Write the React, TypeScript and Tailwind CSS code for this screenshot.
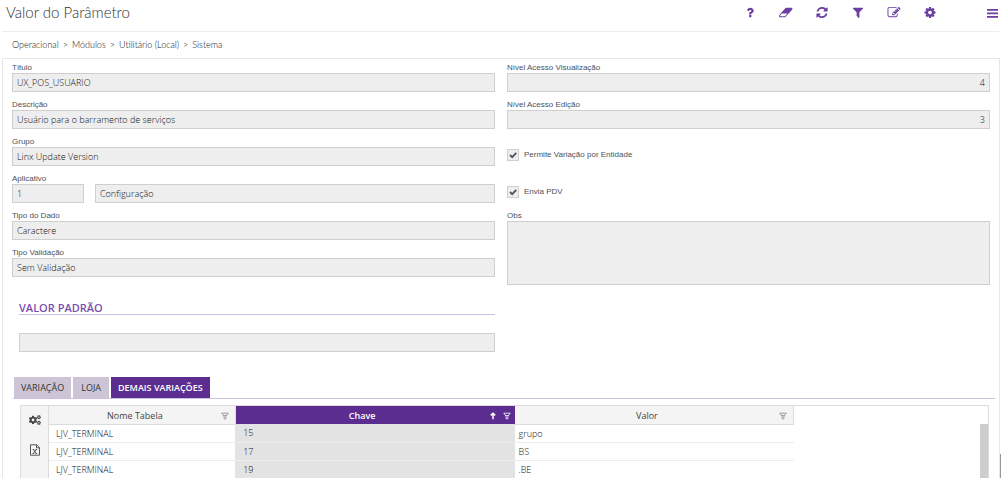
import type { ReactNode } from 'react';
import { FaCogs } from 'react-icons/fa';

const actions = [
  {
    label: 'Ajuda',
    box: '0 0 1792 1792',
    d: 'M1088 1256v240q0 16-12 28t-28 12h-240q-16 0-28-12t-12-28v-240q0-16 12-28t28-12h240q16 0 28 12t12 28zm316-600q0 54-15.5 101t-35 76.5-55 59.5-57.5 43.5-61 35.5q-41 23-68.5 65t-27.5 67q0 17-12 32.5t-28 15.5h-240q-15 0-25.5-18.5t-10.5-37.5v-45q0-83 65-156.5t143-108.5q59-27 84-56t25-76q0-42-46.5-74t-107.5-32q-65 0-108 29-35 25-107 115-13 16-31 16-12 0-25-8l-164-125q-13-10-15.5-25t5.5-28q160-266 464-266 80 0 161 31t146 83 106 127.5 41 158.5z',
  },
  {
    label: 'Limpar',
    box: '0 0 1920 1792',
    d: 'M832 1408l336-384h-768l-336 384h768zm1013-1077q15 34 9.5 71.5t-30.5 65.5l-896 1024q-38 44-96 44h-768q-38 0-69.5-20.5t-47.5-54.5q-15-34-9.5-71.5t30.5-65.5l896-1024q38-44 96-44h768q38 0 69.5 20.5t47.5 54.5z',
  },
  {
    label: 'Atualizar',
    box: '0 0 1792 1792',
    d: 'M1639 1056q0 5-1 7-64 268-268 434.5t-478 166.5q-146 0-282.5-55t-243.5-157l-129 129q-19 19-45 19t-45-19-19-45v-448q0-26 19-45t45-19h448q26 0 45 19t19 45-19 45l-137 137q71 66 161 102t187 36q134 0 250-65t186-179q11-17 53-117 8-23 30-23h192q13 0 22.5 9.5t9.5 22.5zm25-800v448q0 26-19 45t-45 19h-448q-26 0-45-19t-19-45 19-45l138-138q-148-137-349-137-134 0-250 65t-186 179q-11 17-53 117-8 23-30 23h-199q-13 0-22.5-9.5t-9.5-22.5v-7q65-268 270-434.5t480-166.5q146 0 284 55.5t245 156.5l130-129q19-19 45-19t45 19 19 45z',
  },
  {
    label: 'Filtrar',
    box: '0 0 1792 1792',
    d: 'M1595 295q17 41-14 70l-493 493v742q0 42-39 59-13 5-25 5-27 0-45-19l-256-256q-19-19-19-45v-486l-493-493q-31-29-14-70 17-39 59-39h1280q42 0 59 39z',
  },
  {
    label: 'Editar',
    box: '0 0 1792 1792',
    d: 'M888 1184l116-116-152-152-116 116v56h96v96h56zm440-720q-16-16-33 1l-350 350q-17 17-1 33t33-1l350-350q17-17 1-33zm80 594v190q0 119-84.5 203.5t-203.5 84.5h-832q-119 0-203.5-84.5t-84.5-203.5v-832q0-119 84.5-203.5t203.5-84.5h832q63 0 117 25 15 7 18 23 3 17-9 29l-49 49q-14 14-32 8-23-6-45-6h-832q-66 0-113 47t-47 113v832q0 66 47 113t113 47h832q66 0 113-47t47-113v-126q0-13 9-22l64-64q15-15 35-7t20 29zm-96-738l288 288-672 672h-288v-288zm444 132l-92 92-288-288 92-92q28-28 68-28t68 28l152 152q28 28 28 68t-28 68z',
  },
  {
    label: 'Configurar',
    box: '0 0 1792 1792',
    d: 'M1152 896q0-106-75-181t-181-75-181 75-75 181 75 181 181 75 181-75 75-181zm512-109v222q0 12-8 23t-20 13l-185 28q-19 54-39 91 35 50 107 138 10 12 10 25t-9 23q-27 37-99 108t-94 71q-12 0-26-9l-138-108q-44 23-91 38-16 136-29 186-7 28-36 28h-222q-14 0-24.5-8.5t-11.5-21.5l-28-184q-49-16-90-37l-141 107q-10 9-25 9-14 0-25-11-126-114-165-168-7-10-7-23 0-12 8-23 15-21 51-66.5t54-70.5q-27-50-41-99l-183-27q-13-2-21-12.5t-8-23.5v-222q0-12 8-23t19-13l186-28q14-46 39-92-40-57-107-138-10-12-10-24 0-10 9-23 26-36 98.5-107.5t94.5-71.5q13 0 26 10l138 107q44-23 91-38 16-136 29-186 7-28 36-28h222q14 0 24.5 8.5t11.5 21.5l28 184q49 16 90 37l142-107q9-9 24-9 13 0 25 10 129 119 165 170 7 8 7 22 0 12-8 23-15 21-51 66.5t-54 70.5q26 50 41 98l183 28q13 2 21 12.5t8 23.5z',
  },
];

const crumbs = ['Operacional', 'Módulos', 'Utilitário (Local)', 'Sistema'];

const rows = [
  { tabela: 'LJV_TERMINAL', chave: '15', valor: 'grupo' },
  { tabela: 'LJV_TERMINAL', chave: '17', valor: 'BS' },
  { tabela: 'LJV_TERMINAL', chave: '19', valor: '.BE' },
];

const inputClass =
  "block h-[19px] w-full border border-[#cfcfcf] bg-[#eeeeee] px-1 font-['Open_Sans',sans-serif] text-[9px] leading-4 font-light text-[#111111] outline-none";
const labelClass = 'block h-3 text-[8px] leading-[14px] text-[#4c515c]';

function Field({ id, label, value, right }: { id: string; label: string; value: string; right?: boolean }) {
  return (
    <div>
      <label htmlFor={id} className={labelClass}>
        {label}
      </label>
      <input id={id} readOnly value={value} className={right ? `${inputClass} text-right` : inputClass} />
    </div>
  );
}

function Check({ id, label }: { id: string; label: string }) {
  return (
    <div className="flex h-[31px] items-center gap-[5px] pt-2">
      <span className="grid size-3 place-items-center">
        <input
          id={id}
          type="checkbox"
          defaultChecked
          className="col-start-1 row-start-1 size-3 appearance-none border border-[#cfcfcf] bg-[#eeeeee]"
        />
        <svg viewBox="0 0 12 12" className="pointer-events-none col-start-1 row-start-1 size-3" fill="none">
          <path d="M3 6l2.2 2.2L9.3 3.8" stroke="#555555" strokeWidth="1.8" />
        </svg>
      </span>
      <label htmlFor={id} className="text-[8px] leading-3 text-[#4c515c]">
        {label}
      </label>
    </div>
  );
}

function FilterMark() {
  return (
    <svg viewBox="0 0 8 8" className="size-2 shrink-0" fill="none" stroke="currentColor" strokeWidth="0.8">
      <path d="M0.8 1.2h6.4L4.9 4.4v2.4H3.1V4.4zM2.4 3.6h3.2" />
    </svg>
  );
}

function HeaderCell({ children, active }: { children: ReactNode; active?: boolean }) {
  return (
    <th
      className={
        active
          ? 'h-[18px] bg-[#5c2d91] p-0 font-semibold text-white'
          : 'h-[18px] border-r border-b border-[#dcdcdc] bg-[#f4f4f4] p-0 font-normal text-[#444444]'
      }
    >
      <div className="flex items-center pt-0.5 pr-1">
        <span className="flex-1">{children}</span>
        {active && (
          <svg viewBox="0 0 8 8" className="mr-1.5 size-2" fill="none" stroke="currentColor" strokeWidth="1.5">
            <path d="M4 7.2V1.4M1.8 3.4L4 1.2l2.2 2.2" />
          </svg>
        )}
        <span className={active ? 'text-white' : 'pr-0.5 text-[#888888]'}>
          <FilterMark />
        </span>
      </div>
    </th>
  );
}

export default function App() {
  return (
    <div className="bg-white pb-2 pl-0.5 font-['Liberation_Sans',Arial,sans-serif]">
      <header className="mr-0.5 flex h-8 items-center justify-between border-b border-[#eeeeee] pb-1.5 pl-1">
        <h1 className="pb-0.5 font-['Liberation_Sans_Narrow',Lato,sans-serif] text-[15px] leading-6 font-light text-[#333333]">
          Valor do Parâmetro
        </h1>
        <div className="flex items-center text-[#6b3fa0]">
          {actions.map((action) => (
            <button key={action.label} type="button" aria-label={action.label} className="mr-[22px] flex w-[14px] justify-center">
              <svg viewBox={action.box} className="h-[13px] w-[14px] shrink-0" fill="currentColor">
                <path d={action.d} />
              </svg>
            </button>
          ))}
          <button type="button" aria-label="Menu" className="ml-7 flex w-3 justify-center">
            <svg viewBox="0 0 12 12" className="size-3" fill="currentColor">
              <path d="M0 2h11v1.8H0zM0 5.5h11v1.8H0zM0 9h11v1.8H0z" />
            </svg>
          </button>
        </div>
      </header>

      <nav className="flex h-[26px] items-center gap-1 pl-2.5 font-['Lato',sans-serif] text-[9px] leading-3 font-light text-[#111111]">
        {crumbs.map((crumb, i) => (
          <span key={crumb} className="flex gap-1">
            {i > 0 && <span>&gt;</span>}
            <a href="#">{crumb}</a>
          </span>
        ))}
      </nav>

      <div className="flex">
        <main className="min-w-0 flex-1 border-x border-t border-[#e6e6e6] pt-0.5">
          <div className="grid grid-cols-2 gap-x-3 px-[9px]">
            <div className="flex flex-col gap-1.5">
              <Field id="titulo" label="Título" value="UX_POS_USUARIO" />
              <Field id="descricao" label="Descrição" value="Usuário para o barramento de serviços" />
              <Field id="grupo" label="Grupo" value="Linx Update Version" />
              <div>
                <label htmlFor="aplicativo" className={labelClass}>
                  Aplicativo
                </label>
                <div className="grid grid-cols-[72px_1fr] gap-[11px]">
                  <input id="aplicativo" readOnly value="1" className={inputClass} />
                  <input aria-label="Nome do aplicativo" readOnly value="Configuração" className={inputClass} />
                </div>
              </div>
              <Field id="tipo-dado" label="Tipo do Dado" value="Caractere" />
              <Field id="tipo-validacao" label="Tipo Validação" value="Sem Validação" />
            </div>
            <div className="flex flex-col gap-1.5">
              <Field id="visualizacao" label="Nível Acesso Visualização" value="4" right />
              <Field id="edicao" label="Nível Acesso Edição" value="3" right />
              <Check id="variacao" label="Permite Variação por Entidade" />
              <Check id="pdv" label="Envia PDV" />
              <div>
                <label htmlFor="obs" className={labelClass}>
                  Obs
                </label>
                <textarea
                  id="obs"
                  readOnly
                  className="block h-16 w-full resize-none border border-[#cfcfcf] bg-[#eeeeee] p-1 text-[9px] outline-none"
                />
              </div>
            </div>
            <section className="pt-4 pl-[7px]">
              <h2 className="border-b border-[#cdbfe3] font-['Open_Sans',sans-serif] text-[11px] leading-[13px] font-semibold text-[#7a4fb0]">
                VALOR PADRÃO
              </h2>
              <input aria-label="Valor padrão" readOnly value="" className={`${inputClass} mt-[18px]`} />
            </section>
          </div>

          <div className="mt-[25px] mr-1 ml-2.5 flex gap-0.5 border-b border-[#cdbfe3] pl-px font-['Open_Sans',sans-serif] text-[9px] leading-[21px] text-[#333333]">
            <button type="button" className="bg-[#cdc5d6] px-[7px]">
              VARIAÇÃO
            </button>
            <button type="button" className="bg-[#cdc5d6] px-2">
              LOJA
            </button>
            <button type="button" className="bg-[#5c2d91] px-[7px] font-semibold text-white">
              DEMAIS VARIAÇÕES
            </button>
          </div>

          <div className="mt-1.5 mr-2.5 ml-[17px] flex border-t border-r border-[#dcdcdc]">
            <div className="flex w-[29px] shrink-0 flex-col items-center gap-[18px] border-r border-l border-[#dcdcdc] bg-[#f4f4f4] pt-2 text-[#444444]">
              <button type="button" aria-label="Opções">
                <FaCogs className="size-3" />
              </button>
              <button type="button" aria-label="Exportar para Excel">
                <svg viewBox="0 0 12 12" className="size-3" fill="none" stroke="currentColor" strokeWidth="0.9">
                  <path d="M1.5 0.8h6.2l2.8 2.8v7.6h-9zM7.5 0.8v3h3M3.8 5.5h1.4M6.6 5.5H8M3.6 9.5h1.5M6.6 9.5h1.5M4.3 5.5l3 4M7.3 5.5l-3 4" />
                </svg>
              </button>
            </div>
            <table className="w-[77%] table-fixed border-collapse font-['Open_Sans',sans-serif] text-[9px] leading-3 text-[#444444]">
              <colgroup>
                <col className="w-1/4" />
                <col className="w-3/8" />
                <col />
              </colgroup>
              <thead>
                <tr>
                  <HeaderCell>Nome Tabela</HeaderCell>
                  <HeaderCell active>Chave</HeaderCell>
                  <HeaderCell>Valor</HeaderCell>
                </tr>
              </thead>
              <tbody className="font-light text-[#111111]">
                {rows.map((row) => (
                  <tr key={row.chave} className="border-b border-[#ececec] last:border-b-0">
                    <td className="h-[18px] p-0 pt-px pl-[7px]">{row.tabela}</td>
                    <td className="h-[18px] bg-[#e3e3e3] p-0 pt-px pl-2">{row.chave}</td>
                    <td className="h-[18px] p-0 pt-px pl-1">{row.valor}</td>
                  </tr>
                ))}
              </tbody>
            </table>
            <div className="ml-auto w-2 pt-[18px]">
              <div className="h-full bg-[#cdcdcd]" />
            </div>
          </div>
        </main>
        <div className="flex w-px flex-col justify-end">
          <div className="h-6 bg-[#999999]" />
        </div>
      </div>
    </div>
  );
}
